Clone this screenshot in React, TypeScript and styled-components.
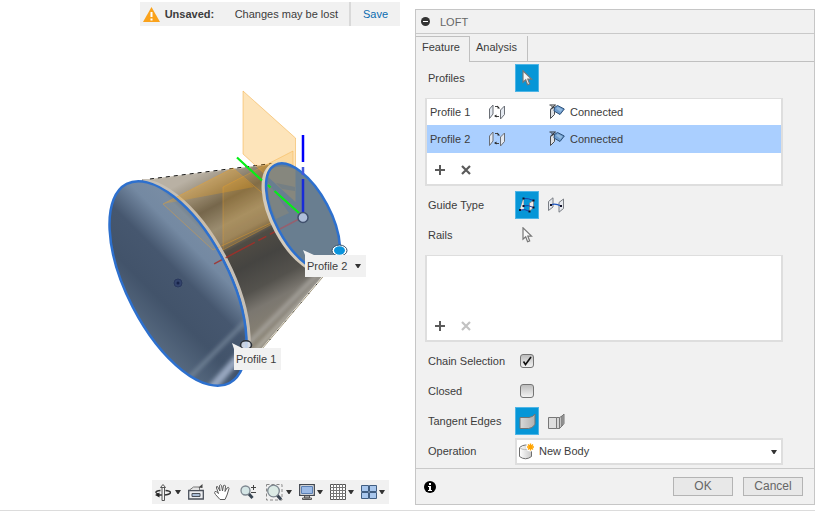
import React from "react";
import styled, { createGlobalStyle } from "styled-components";

const GlobalStyle = createGlobalStyle`
  *, *::before, *::after { box-sizing: border-box; }
  body {
    margin: 0;
    background: #fff;
    color: #3c3c3c;
    font: 11px/14px "Liberation Sans", Arial, sans-serif;
  }
  button, input, select { font: inherit; color: inherit; margin: 0; }
  svg { display: block; flex: none; }
`;

/* ---------- page ---------- */

const Page = styled.div`
  display: flex;
  min-height: 100vh;
  border-bottom: 1px solid #dcdcdc;
`;

const Workspace = styled.main`
  flex: 1;
  min-width: 0;
  display: flex;
  flex-direction: column;
  align-items: flex-end;
  padding: 2px 15px 6px 0;
`;

const NoticeBar = styled.div`
  display: flex;
  align-items: stretch;
  height: 24px;
  background: #f1f1f1;
`;

const NoticeText = styled.div`
  display: flex;
  align-items: center;
  padding: 0 11px 0 3px;
  border-right: 2px solid #d9d9d9;
`;

const NoticeTitle = styled.strong`
  width: 70px;
  margin-left: 5px;
`;

const SaveLink = styled.a`
  width: 49px;
  line-height: 24px;
  text-align: center;
  color: #0b6cb0;
  text-decoration: none;
`;

const Scene = styled.div`
  position: relative;
  width: 290px;
  margin: 54px 20px 0 0;
`;

const Callout = styled.div<{ $x: number; $y: number }>`
  position: absolute;
  left: ${(p) => p.$x}px;
  top: ${(p) => p.$y}px;
  display: flex;
  align-items: center;
  gap: 8px;
  height: 22px;
  padding: 0 5px 0 2px;
  background: #f1f1f1;
  white-space: nowrap;
`;

const CaretButton = styled.button`
  padding: 0;
  border: 0;
  background: none;
`;

const NavBar = styled.div`
  display: flex;
  align-items: center;
  gap: 7px;
  height: 24px;
  margin: auto 11px 0 0;
  padding: 0 4px 0 3px;
  background: #f1f1f1;
`;

const NavTool = styled.button<{ $gap?: number }>`
  display: flex;
  align-items: center;
  gap: ${(p) => p.$gap ?? 0}px;
  padding: 0 ${(p) => (p.$gap ? 0 : 3)}px 0 0;
  border: 0;
  background: none;
`;

/* ---------- dialog ---------- */

const Dialog = styled.section`
  flex: 0 0 400px;
  align-self: flex-start;
  margin-top: 9px;
  border: 1px solid #c6c6c6;
  background: #f1f1f1;
`;

const DialogHeader = styled.header`
  display: flex;
  align-items: center;
  gap: 10px;
  height: 24px;
  padding-left: 5px;
  border-bottom: 1px solid #c9c9c9;
`;

const DialogTitle = styled.h1`
  margin: 0;
  font-size: 11px;
  font-weight: normal;
  color: #666;
`;

const CollapseButton = styled.button`
  padding: 0;
  border: 0;
  background: none;
`;

const TabList = styled.div`
  display: flex;
  height: 28px;
  padding-top: 2px;
  &::after {
    content: "";
    flex: 1;
    border-bottom: 1px solid #c0c0c0;
  }
`;

const Tab = styled.button<{ $active?: boolean }>`
  padding: 0 ${(p) => (p.$active ? 9 : 10)}px ${(p) => (p.$active ? 5 : 3)}px 6px;
  border: solid #c0c0c0;
  border-width: ${(p) => (p.$active ? "1px 1px 0 0" : "0 1px 1px 0")};
  background: none;
`;

const DialogBody = styled.form`
  padding: 1px 31px 2px 9px;
`;

const Field = styled.div`
  display: flex;
  align-items: center;
  height: 30px;
  padding-left: 3px;
`;

const FieldLabel = styled.label`
  flex: 0 0 87px;
`;

const IconButton = styled.button<{ $on?: boolean }>`
  display: grid;
  place-items: center;
  width: 24px;
  height: 28px;
  margin-right: 5px;
  padding: 0;
  border: 1px solid ${(p) => (p.$on ? "#4fb5e6" : "transparent")};
  background: ${(p) => (p.$on ? "#0696d7" : "transparent")};
`;

const ListBox = styled.div`
  display: flex;
  flex-direction: column;
  min-height: 87px;
  margin: 5px 0 4px;
  border: 2px solid #dedede;
  border-top-width: 1px;
  background: #fff;
`;

const ProfileTable = styled.table`
  width: 100%;
  table-layout: fixed;
  border-collapse: collapse;
`;

const ProfileRow = styled.tr<{ $selected?: boolean }>`
  height: ${(p) => (p.$selected ? 28 : 26)}px;
  background: ${(p) => (p.$selected ? "#aacfff" : "transparent")};
`;

const Cell = styled.td<{ $width?: number }>`
  width: ${(p) => (p.$width ? `${p.$width}px` : "auto")};
  padding: 0 0 0 3px;
`;

const CellContent = styled.span`
  display: flex;
  align-items: center;
  gap: 5px;
`;

const ListActions = styled.div`
  display: flex;
  gap: 14px;
  margin-top: auto;
  padding: 11px 7px 8px;
`;

const ListAction = styled.button`
  padding: 0;
  border: 0;
  background: none;
  color: #5a5a5a;
  &:disabled { color: #c2c2c2; }
`;

const CheckWrap = styled.span`
  position: relative;
  margin-left: 5px;
  > svg {
    position: absolute;
    left: 1px;
    top: 1px;
    pointer-events: none;
    visibility: hidden;
  }
  > input:checked + svg { visibility: visible; }
`;

const CheckBox = styled.input`
  display: block;
  appearance: none;
  width: 14px;
  height: 14px;
  border: 1px solid #747474;
  border-radius: 3px;
  background: linear-gradient(#bdbdbd, #f2f2f2);
`;

const SelectWrap = styled.div`
  position: relative;
  flex: 1;
  > svg { position: absolute; pointer-events: none; }
  > svg:first-child { left: 3px; top: 5px; }
  > svg:last-child { right: 6px; top: 12px; }
`;

const Select = styled.select`
  display: block;
  width: 100%;
  height: 27px;
  padding: 0 20px 0 22px;
  appearance: none;
  border: 2px solid #dedede;
  border-radius: 0;
  background: #fff;
`;

const DialogFooter = styled.footer`
  display: flex;
  align-items: center;
  gap: 10px;
  height: 36px;
  padding: 0 11px 0 8px;
  border-top: 1px solid #c9c9c9;
`;

const InfoButton = styled.button`
  margin-right: auto;
  padding: 0;
  border: 0;
  background: none;
`;

const ActionButton = styled.button`
  width: 60px;
  height: 19px;
  padding: 0;
  border: 1px solid #b4b4b4;
  background: #e8e8e8;
  color: #666;
  font-size: 12px;
  line-height: 17px;
`;

/* ---------- small glyphs ---------- */

const Caret = () => (
  <svg width="6" height="4" viewBox="0 0 6 4"><path d="M0 0h6L3.5 4h-1z" fill="#333" /></svg>
);

const Warning = () => (
  <svg width="17" height="15" viewBox="0 0 17 15">
    <path d="M8.500 0 17 15H0z" fill="#faa21b" />
    <path d="M7.500 5h2v5h-2zM7.500 11.500h2v2h-2z" fill="#fff" />
  </svg>
);

const Cursor = ({ filled }: { filled?: boolean }) => (
  <svg width="12" height="16" viewBox="0 0 12 16">
    <path
      d="M2 .8V12.200L4.700 9.700 6.600 14.800 8.700 14 6.800 9.100H10.500Z"
      fill={filled ? "#f5f5f5" : "#fafafa"} stroke="#777" strokeWidth="1.200"
    />
  </svg>
);

const Direction = () => (
  <svg width="16" height="16" viewBox="0 0 16 16">
    <path d="M.500 5 4 1V10L.500 14.500zM11.500 6 15.500 2V10.500L11.500 15z" fill="#e4e9f0" stroke="#6b6f76" />
    <path d="M6 2.500h3M7 12.500H10" stroke="#444" fill="none" />
    <path d="M8.500 1.500 11 4.500H8.500zM7.500 10.500V13.500L5 12z" fill="#222" />
  </svg>
);

const Connected = () => (
  <svg width="16" height="16" viewBox="0 0 16 16">
    <path d="M1.500 5.500 5.500 3V10.500L1.500 14.500z" fill="#dfe1e4" stroke="#4a4d52" />
    <path d="M5.500 3.500 8.500 1.500 15.300 5 11 10.500 5 7z" fill="#6c9bcd" stroke="#2d5078" />
    <path d="M7 4.500 9 3 13.500 5.500 11.500 8z" fill="#93bae0" />
    <path d="M.500 1H6.500L1.500 5M2 1.500 4 3.500" fill="none" stroke="#2b2e33" />
  </svg>
);

const Plus = () => (
  <svg width="12" height="12" viewBox="0 0 12 12"><path d="M6 1v10M1 6h10" stroke="currentColor" strokeWidth="2" /></svg>
);

const Cross = () => (
  <svg width="12" height="12" viewBox="0 0 12 12"><path d="M2 2 10 10M10 2 2 10" stroke="currentColor" strokeWidth="2.200" /></svg>
);

const RailsIcon = () => (
  <svg width="16" height="16" viewBox="0 0 16 16">
    <path d="M1 13 4.500 2V9L2.500 13zM10.500 6 14.500 3.500V10.500L10.500 14z" fill="#ececec" stroke="#8a8f96" />
    <path d="M1 13 4.500 2V9.500L5 12.500z" fill="#ececec" />
    <path d="M4.500 1.500Q9 1 14.500 3.500M4.500 9Q9 7.500 14.500 10.500M1 13Q6 11.500 10.500 14.500" fill="none" stroke="#1c3da6" />
    <path d="M3.500.500h2v2h-2zM13.500 2.500h2v2h-2zM3.500 8h2v2h-2zM13.500 9.500h2v2h-2zM0 12h2v2H0zM9.500 13.500h2v2h-2z" fill="#101020" />
  </svg>
);

const CenterlineIcon = () => (
  <svg width="16" height="16" viewBox="0 0 16 16">
    <path d="M.500 4.500 5 .800V10L.500 13.500zM11 5.500 15.500 2V11.500L11 15.200z" fill="#e6e9ee" stroke="#7a7e85" />
    <path d="M3 8Q7 6 13 9" fill="none" stroke="#1d55c0" strokeWidth="1.300" />
    <path d="M2 7h2v2H2zM12 8h2v2h-2z" fill="#15152b" />
  </svg>
);

const TangentMerge = () => (
  <svg width="17" height="17" viewBox="0 0 17 17">
    <defs><linearGradient id="tm"><stop stopColor="#d9d9d9" /><stop offset="1" stopColor="#b0b0b0" /></linearGradient></defs>
    <path d="M1 4.500H10Q14 4 16 1V11.500Q13 15.500 9.500 15.500H1z" fill="url(#tm)" stroke="#737373" />
  </svg>
);

const TangentKeep = () => (
  <svg width="17" height="17" viewBox="0 0 17 17" stroke="#777">
    <path d="M.500 4.500H8.500V15.500H.500z" fill="#dedede" /><path d="M8.500 4.500H11.500V15.500H8.500z" fill="#d4d4d4" />
    <path d="M11.500 4.500 14 3V13L11.500 15.500z" fill="#c4c4c4" /><path d="M14 3 16 1V10.500L14 13z" fill="#aaa" />
  </svg>
);

const BodyIcon = () => (
  <svg width="17" height="17" viewBox="0 0 17 17">
    <defs><linearGradient id="bd"><stop stopColor="#fff" /><stop offset="1" stopColor="#c8c8c8" /></linearGradient></defs>
    <path d="M1.500 4.500V13.500Q7.500 18 13.500 13.500V4.500Q7.500-.500 1.500 4.500z" fill="url(#bd)" stroke="#6e6e6e" />
    <path d="M1.500 4.500Q6 8.500 13.500 5" fill="none" stroke="#bbb" />
    <circle cx="12.500" cy="4" r="4.500" fill="#fff" />
    <path d="M12.500.500v7M9 4h7M10 1.500l5 5M15 1.500l-5 5" stroke="#ffa400" strokeWidth="1.400" />
  </svg>
);

/* ---------- navigation icons ---------- */

const OrbitIcon = () => (
  <svg width="16" height="17" viewBox="0 0 16 17" fill="none">
    <path d="M5.500 6.500Q.500 7 1 8.500Q1.500 9.500 3 10M10.500 6.500Q15.500 7 15.500 8.500Q15 10.500 9 11H4" stroke="#333" strokeWidth="1.400" />
    <path d="M5.500 3.500 8 .500 10.500 3.500zM7 3V16.500H9.500V3" fill="#f5f5f5" stroke="#555" />
    <path d="M0 11 4.500 8.500V13.500z" fill="#222" />
  </svg>
);
const LookAtIcon = () => (
  <svg width="16" height="16" viewBox="0 0 16 16">
    <path d="M.700 6.500H15.300V15H.700z" fill="#eceef1" stroke="#4b515b" strokeWidth="1.300" />
    <path d="M4 9.500h8v3H4z" fill="#a9bdd6" stroke="#4b515b" />
    <path d="M1.500 6 5.500 3H11.500V6" fill="#e4e4e4" stroke="#777" /><path d="M10.500 3.500 14.500 0V4z" fill="#444" />
  </svg>
);
const HandIcon = () => (
  <svg width="16" height="17" viewBox="0 0 16 17">
    <path
      d="M6 15.500 1.500 10.500Q-.500 8 1 7.500Q2 7 4.500 9.500L2.500 4Q2 2 3.500 2.500L6 7 5.500 1.500Q6.500 0 7.500 1.500L8.500 7 9.500 1.500Q11 .500 11.500 2L11 7.500 13 4Q15 2.500 15 4.500L13 11 11 15.500z"
      fill="#fff" stroke="#5a5a5a" strokeLinejoin="round"
    />
  </svg>
);
const ZoomIcon = () => (
  <svg width="16" height="16" viewBox="0 0 16 16">
    <path d="M8.500 9.500 12.500 14" stroke="#3a4653" strokeWidth="3" />
    <circle cx="5.500" cy="6.500" r="4.500" fill="#d5e6e6" stroke="#7d8790" strokeWidth="1.300" />
    <path d="M11 3.500h5M13.500 1v5M11 8.500h5" stroke="#444" />
  </svg>
);
const ZoomWindowIcon = () => (
  <svg width="17" height="17" viewBox="0 0 17 17">
    <path d="M.500.500H16V16H.500z" fill="none" stroke="#888" strokeDasharray="3 2" />
    <path d="M11 11 15 15.500" stroke="#3a4653" strokeWidth="3" />
    <circle cx="7.500" cy="7" r="5.800" fill="#dcebe6" stroke="#7d8790" strokeWidth="1.300" />
  </svg>
);
const DisplayIcon = () => (
  <svg width="16" height="16" viewBox="0 0 16 16">
    <path d="M.700.700H15.300V11.300H.700z" fill="#fff" stroke="#414750" strokeWidth="1.300" />
    <path d="M2.500 2.500h11v7h-11z" fill="#9bbae6" stroke="#5b80b5" />
    <path d="M5.500 12h5v2h-5zM3.500 14h9v1.500h-9z" fill="#eee" stroke="#555" />
  </svg>
);
const GridIcon = () => (
  <svg width="16" height="16" viewBox="0 0 16 16">
    <path d="M.500.500h15v15H.500z" fill="#fff" stroke="#555" />
    <path d="M3.500 0v16M6.500 0v16M9.500 0v16M12.500 0v16M0 3.500h16M0 6.500h16M0 9.500h16M0 12.500h16" stroke="#777" />
  </svg>
);
const ViewportsIcon = () => (
  <svg width="16" height="14" viewBox="0 0 16 14" fill="#a9c7ed" stroke="#415e82">
    <path d="M.500.500h7v6H.500zM8.500.500h7v6H8.500zM.500 7.500h7v6H.500zM8.500 7.500h7v6H8.500z" />
  </svg>
);

/* ---------- loft model ---------- */

const LoftModel = () => (
  <svg width="290" height="320" viewBox="90 80 290 320" role="img" aria-label="Loft preview between two profiles">
    <defs>
      <linearGradient id="skin" gradientUnits="userSpaceOnUse" x1="210" y1="168" x2="293" y2="326">
        <stop offset="0" stopColor="#b9b1a4" />
        <stop offset=".1" stopColor="#958b79" />
        <stop offset=".2" stopColor="#6c624f" />
        <stop offset=".32" stopColor="#938a76" />
        <stop offset=".4" stopColor="#857c6c" />
        <stop offset=".46" stopColor="#504c44" />
        <stop offset=".58" stopColor="#454441" />
        <stop offset=".72" stopColor="#54524d" />
        <stop offset=".82" stopColor="#7b7770" />
        <stop offset="1" stopColor="#8b8474" />
      </linearGradient>
      <linearGradient id="face" gradientUnits="userSpaceOnUse" x1="140" y1="181" x2="205" y2="386">
        <stop offset="0" stopColor="#8996a2" />
        <stop offset=".07" stopColor="#7d8d9b" />
        <stop offset=".16" stopColor="#4f6072" />
        <stop offset=".26" stopColor="#788ca4" />
        <stop offset=".34" stopColor="#7489a2" />
        <stop offset=".47" stopColor="#46576f" />
        <stop offset=".62" stopColor="#42536a" />
        <stop offset=".8" stopColor="#586b81" />
        <stop offset=".9" stopColor="#73879a" />
        <stop offset="1" stopColor="#8595aa" />
      </linearGradient>
      <clipPath id="skinClip"><path d="M137 181 282 163 340 255 250 362 235 300z" /></clipPath>
      <clipPath id="rimClip"><path d="M142 179H260V347H236z" /></clipPath>
      <clipPath id="faceClip"><ellipse cx="178" cy="283.500" rx="112" ry="51" transform="rotate(62.700 178 283.500)" /></clipPath>
      <filter id="soft"><feGaussianBlur stdDeviation="2" /></filter>
    </defs>

    <path d="M137 181 282 163 340 255 250 362z" fill="url(#skin)" />
    <g clipPath="url(#skinClip)">
      <path d="M236 356 328 264" stroke="#a9a6a0" strokeWidth="4" filter="url(#soft)" />
      <path d="M248 358 338 262" stroke="#c0bdb6" strokeWidth="3" filter="url(#soft)" />
    </g>
    <path d="M142 180.500 280 163" stroke="#c9c2b5" />
    <path d="M142 180 280 162.500" stroke="#111" strokeDasharray="4 4" />
    <path d="M262 349 338 259" stroke="#a59b80" />
    <path d="M262 349 338 259" stroke="#111" strokeDasharray="1 11" />

    <g clipPath="url(#rimClip)">
      <ellipse cx="180.500" cy="282.500" rx="112" ry="51" transform="rotate(62.700 180.500 282.500)" fill="none" stroke="#c6bfb5" strokeWidth="3.500" />
    </g>
    <ellipse cx="178" cy="283.500" rx="112" ry="51" transform="rotate(62.700 178 283.500)" fill="url(#face)" />
    <g clipPath="url(#faceClip)" filter="url(#soft)">
      <path d="M183 384 247 320" stroke="#7d8ea0" strokeWidth="3" />
      <path d="M210 390 252 342" stroke="#98a7c0" strokeWidth="8" />
    </g>
    <circle cx="178" cy="283" r="4" fill="#33436c" stroke="#29385c" /><circle cx="178" cy="283" r="1.500" fill="#172348" />

    <g fill="#f9a51a" stroke="#f0a22a">
      <path d="M243 91 295.500 138V202L243 154z" fillOpacity=".3" strokeOpacity=".45" />
      <path d="M163 204 233 168 288 215 213 250z" fillOpacity=".07" strokeOpacity=".4" />
      <path d="M223 187 293 151V213L223 250z" fillOpacity=".16" strokeOpacity=".35" />
      <path d="M163 204 233 168 254 187z" fillOpacity=".28" stroke="none" />
    </g>
    <path d="M299 219 212 265" stroke="#a52e28" strokeOpacity=".85" strokeWidth="1.500" strokeDasharray="33 4 9 4" />

    <ellipse cx="300.500" cy="218" rx="59.500" ry="27.300" transform="rotate(61.900 300.500 218)" fill="none" stroke="#d3cabb" strokeWidth="4" />
    <path d="M267 184Q263 161 285 162" fill="none" stroke="#edd9b1" strokeWidth="3" />
    <ellipse cx="303" cy="217.500" rx="59.500" ry="27.300" transform="rotate(61.900 303 217.500)" fill="#697e90" />
    <path d="M267 183Q266 160 295.500 169V202L267 176z" fill="#86877e" />
    <path d="M276 183 295 187V191L282 189z" fill="#747f84" />
    <path d="M267 181 289 213 276 219Q268 202 267 181z" fill="#7b8383" />
    <path d="M299 219 280 229" stroke="#95606f" strokeWidth="1.500" />

    <g fill="none" stroke="#2d70ce" strokeWidth="2.500">
      <ellipse cx="178" cy="283.500" rx="112" ry="51" transform="rotate(62.700 178 283.500)" />
      <ellipse cx="303" cy="217.500" rx="59.500" ry="27.300" transform="rotate(61.900 303 217.500)" />
    </g>

    <path d="M237 157.500 262 180.500M268 185 270.500 187.500M274.500 191 299 213" stroke="#06ee16" strokeWidth="2.200" />
    <path d="M303 135V162" stroke="#0000fa" strokeWidth="2.500" />
    <path d="M303 167V175" stroke="#4358dd" strokeWidth="2.500" />
    <path d="M303 179V213" stroke="#182bd8" strokeWidth="2.500" />
    <circle cx="303" cy="217.500" r="5" fill="#aebed9" stroke="#40506c" strokeWidth="1.500" />

    <ellipse cx="339.500" cy="250.500" rx="7.500" ry="5.500" fill="#fff" stroke="#34506a" />
    <ellipse cx="339.500" cy="250.500" rx="5.500" ry="4.200" fill="#0b94dc" />
    <ellipse cx="246" cy="345" rx="5.500" ry="4.200" fill="#dce3ef" fillOpacity=".85" stroke="#2b3037" strokeWidth="1.600" />
    <path d="M303 250 314 255H305zM232 343 244 349H234z" fill="#f1f1f1" />
  </svg>
);

const profiles = [
  { name: "Profile 1", state: "Connected", selected: false },
  { name: "Profile 2", state: "Connected", selected: true },
];

export default function App() {
  return (
    <>
      <GlobalStyle />
      <Page>
        <Workspace>
          <NoticeBar role="status">
            <NoticeText>
              <Warning />
              <NoticeTitle>Unsaved:</NoticeTitle>
              <span>Changes may be lost</span>
            </NoticeText>
            <SaveLink href="#save">Save</SaveLink>
          </NoticeBar>

          <Scene>
            <LoftModel />
            <Callout $x={215} $y={175}>
              Profile 2
              <CaretButton type="button" aria-label="Profile 2 options"><Caret /></CaretButton>
            </Callout>
            <Callout $x={144} $y={268}>Profile 1</Callout>
          </Scene>

          <NavBar role="toolbar" aria-label="Navigation">
            <NavTool $gap={4} aria-label="Orbit"><OrbitIcon /><Caret /></NavTool>
            <NavTool aria-label="Look at"><LookAtIcon /></NavTool>
            <NavTool aria-label="Pan"><HandIcon /></NavTool>
            <NavTool aria-label="Zoom"><ZoomIcon /></NavTool>
            <NavTool $gap={3} aria-label="Zoom window"><ZoomWindowIcon /><Caret /></NavTool>
            <NavTool $gap={2} aria-label="Display settings"><DisplayIcon /><Caret /></NavTool>
            <NavTool $gap={2} aria-label="Grid and snaps"><GridIcon /><Caret /></NavTool>
            <NavTool $gap={2} aria-label="Viewports"><ViewportsIcon /><Caret /></NavTool>
          </NavBar>
        </Workspace>

        <Dialog aria-labelledby="dialog-title">
          <DialogHeader>
            <CollapseButton type="button" aria-label="Collapse">
              <svg width="9" height="9" viewBox="0 0 9 9"><circle cx="4.500" cy="4.500" r="4.500" fill="#333" /><path d="M2 4.500h5" stroke="#fff" /></svg>
            </CollapseButton>
            <DialogTitle id="dialog-title">LOFT</DialogTitle>
          </DialogHeader>

          <TabList role="tablist">
            <Tab role="tab" aria-selected $active>Feature</Tab>
            <Tab role="tab" aria-selected={false}>Analysis</Tab>
          </TabList>

          <DialogBody>
            <Field>
              <FieldLabel htmlFor="profiles">Profiles</FieldLabel>
              <IconButton id="profiles" type="button" $on><Cursor filled /></IconButton>
            </Field>
            <ListBox>
              <ProfileTable>
                <tbody>
                  {profiles.map((p) => (
                    <ProfileRow key={p.name} $selected={p.selected}>
                      <Cell $width={59}>{p.name}</Cell>
                      <Cell $width={60}><Direction /></Cell>
                      <Cell><CellContent><Connected />{p.state}</CellContent></Cell>
                    </ProfileRow>
                  ))}
                </tbody>
              </ProfileTable>
              <ListActions>
                <ListAction type="button" aria-label="Add profile"><Plus /></ListAction>
                <ListAction type="button" aria-label="Remove profile"><Cross /></ListAction>
              </ListActions>
            </ListBox>

            <Field>
              <FieldLabel htmlFor="guide-rails">Guide Type</FieldLabel>
              <IconButton id="guide-rails" type="button" aria-label="Guide Type: Rails" $on><RailsIcon /></IconButton>
              <IconButton type="button" aria-label="Guide Type: Centerline"><CenterlineIcon /></IconButton>
            </Field>
            <Field>
              <FieldLabel htmlFor="rails">Rails</FieldLabel>
              <IconButton id="rails" type="button"><Cursor /></IconButton>
            </Field>
            <ListBox>
              <ListActions>
                <ListAction type="button" aria-label="Add rail"><Plus /></ListAction>
                <ListAction type="button" aria-label="Remove rail" disabled><Cross /></ListAction>
              </ListActions>
            </ListBox>

            <Field>
              <FieldLabel htmlFor="chain">Chain Selection</FieldLabel>
              <CheckWrap>
                <CheckBox id="chain" type="checkbox" defaultChecked />
                <svg width="12" height="12" viewBox="0 0 12 12"><path d="M2.500 6.500 4.500 9.500 10 2" fill="none" stroke="#111" strokeWidth="1.600" /></svg>
              </CheckWrap>
            </Field>
            <Field>
              <FieldLabel htmlFor="closed">Closed</FieldLabel>
              <CheckWrap>
                <CheckBox id="closed" type="checkbox" />
                <svg width="12" height="12" viewBox="0 0 12 12"><path d="M2.500 6.500 4.500 9.500 10 2" fill="none" stroke="#111" strokeWidth="1.600" /></svg>
              </CheckWrap>
            </Field>
            <Field>
              <FieldLabel htmlFor="tangent-merge">Tangent Edges</FieldLabel>
              <IconButton id="tangent-merge" type="button" aria-label="Tangent Edges: Merge" $on><TangentMerge /></IconButton>
              <IconButton type="button" aria-label="Tangent Edges: Keep"><TangentKeep /></IconButton>
            </Field>
            <Field>
              <FieldLabel htmlFor="operation">Operation</FieldLabel>
              <SelectWrap>
                <BodyIcon />
                <Select id="operation" defaultValue="new">
                  <option value="new">New Body</option>
                </Select>
                <Caret />
              </SelectWrap>
            </Field>
          </DialogBody>

          <DialogFooter>
            <InfoButton type="button" aria-label="Information">
              <svg width="12" height="12" viewBox="0 0 12 12"><circle cx="6" cy="6" r="6" fill="#000" /><path d="M5 2h2v2H5zM4 5h3v4h1v1H4V9h1V6H4z" fill="#fff" /></svg>
            </InfoButton>
            <ActionButton type="button">OK</ActionButton>
            <ActionButton type="button">Cancel</ActionButton>
          </DialogFooter>
        </Dialog>
      </Page>
    </>
  );
}
